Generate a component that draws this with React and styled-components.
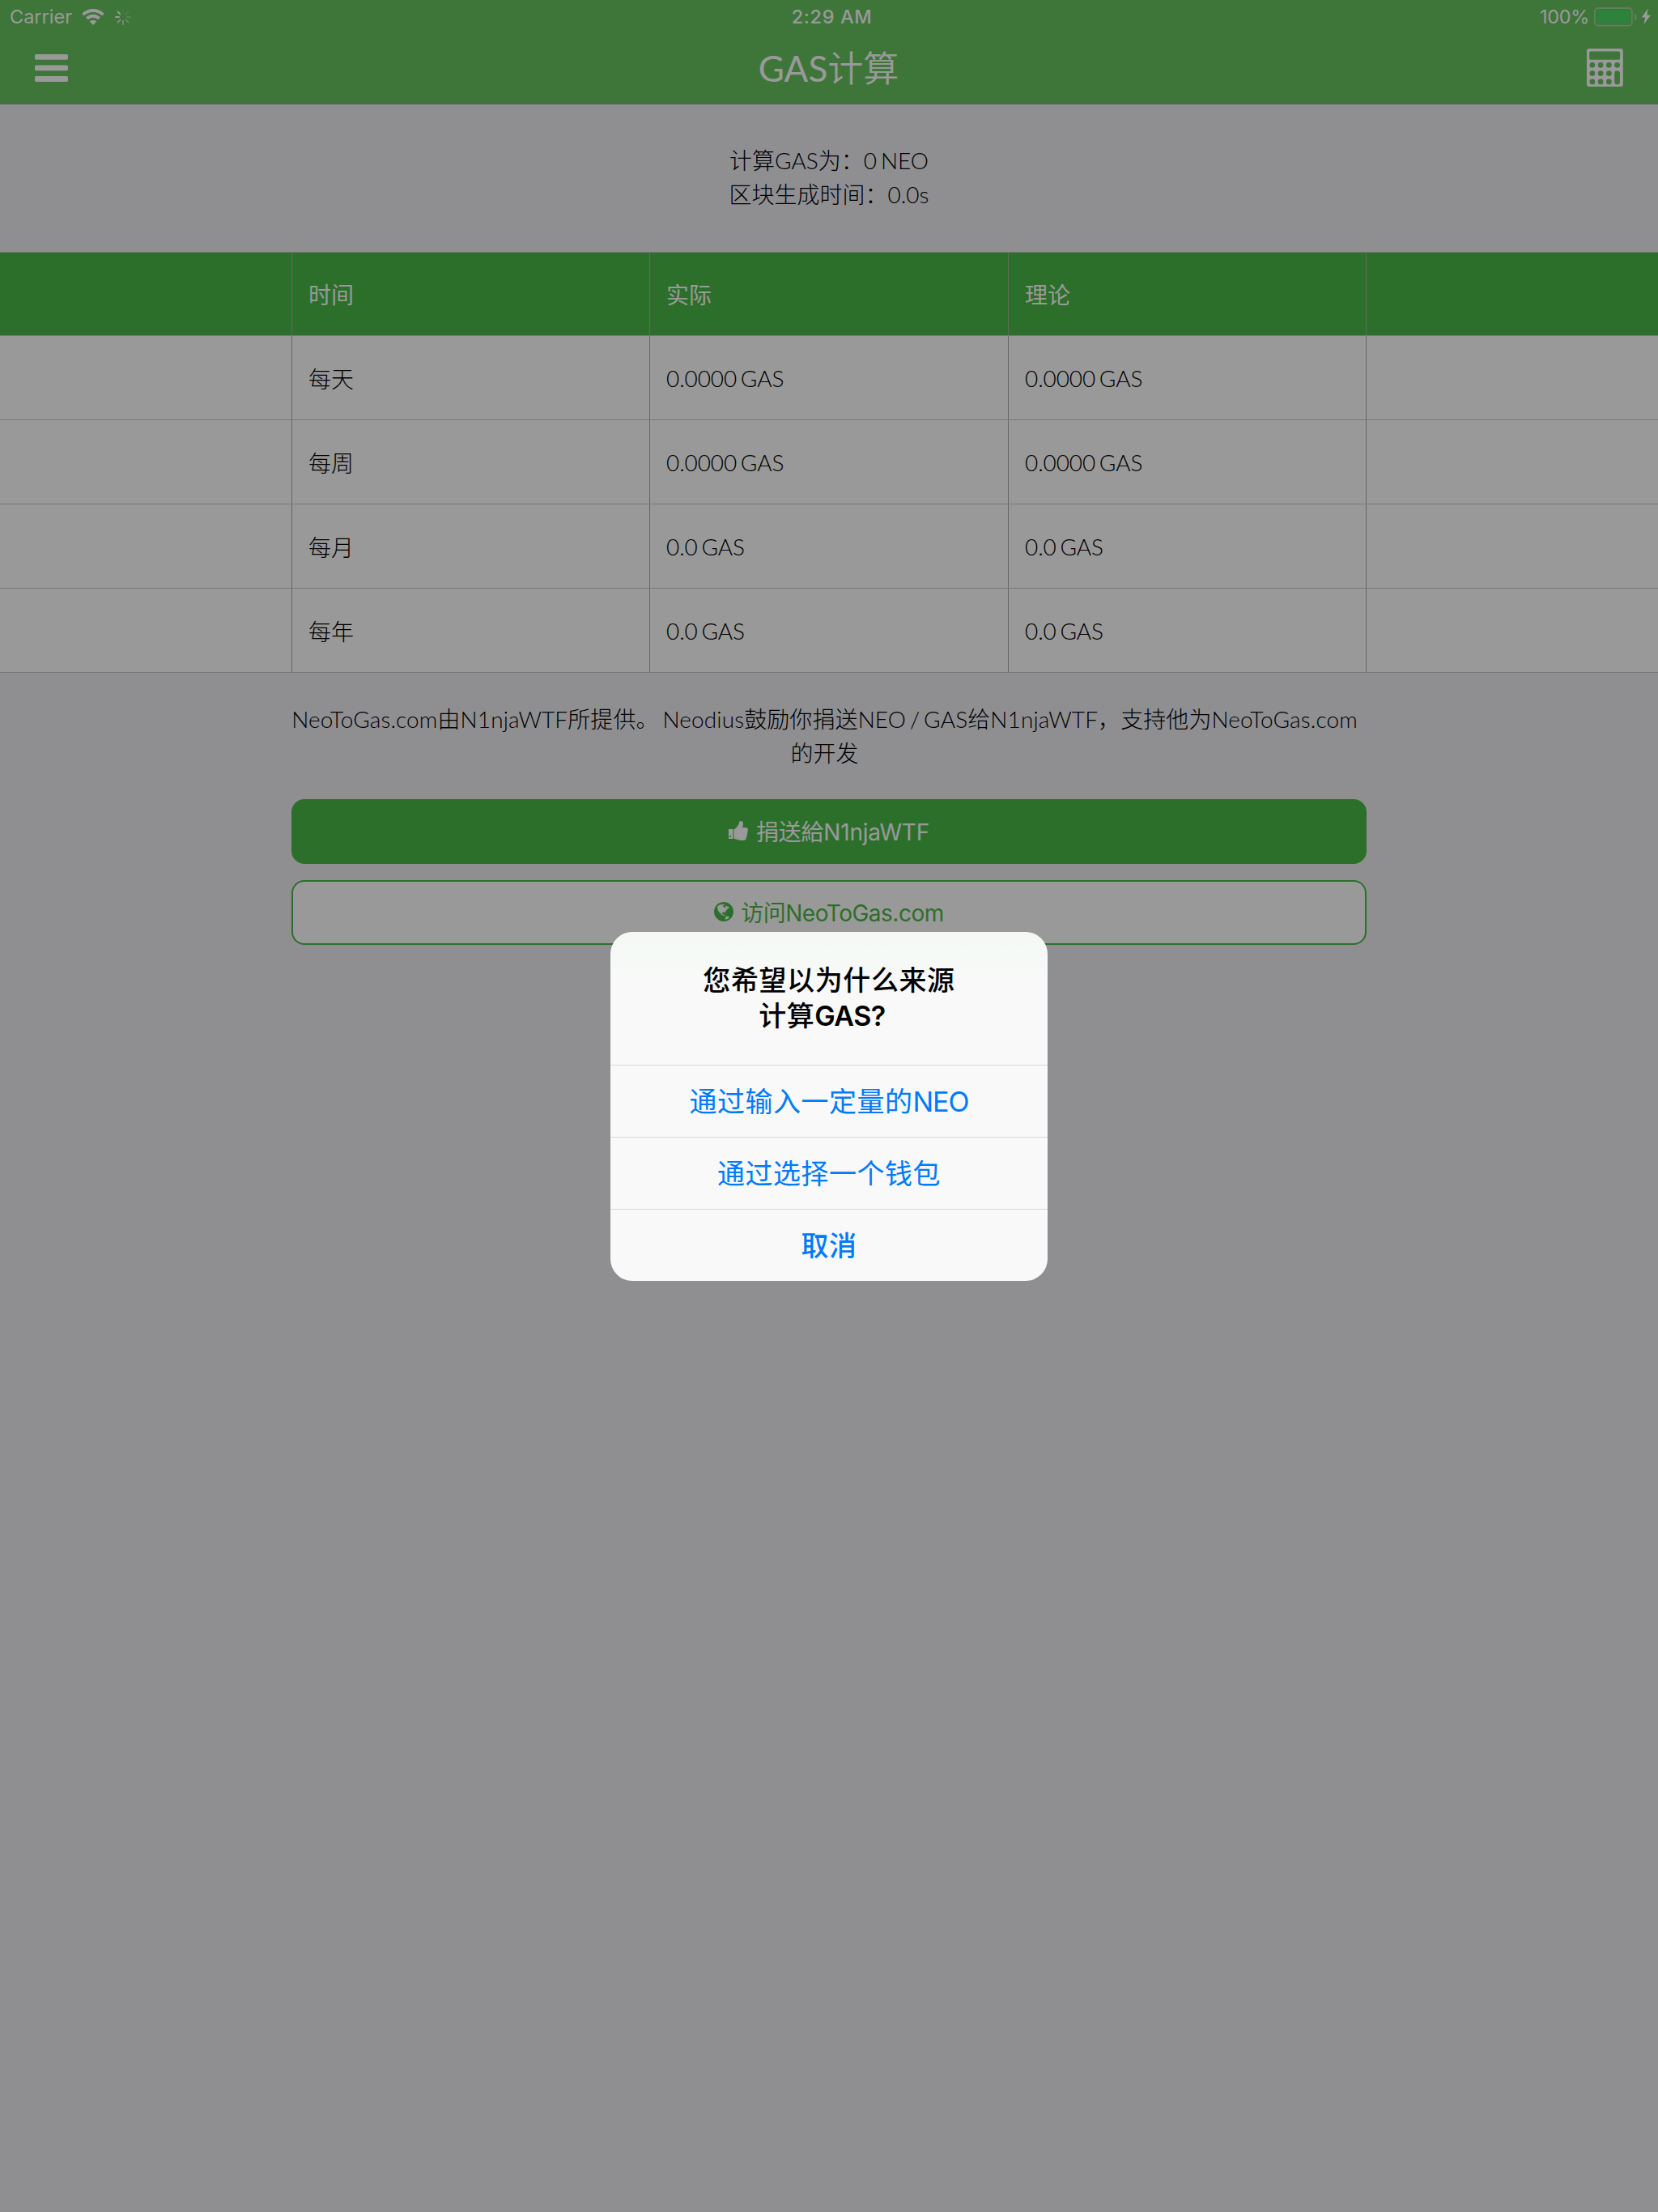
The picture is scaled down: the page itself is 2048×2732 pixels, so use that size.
import React from "react";
import styled, { createGlobalStyle, css } from "styled-components";

const GlobalStyle = createGlobalStyle`
  * { box-sizing: border-box; }
  html, body { margin: 0; padding: 0; background: #efeff4; }
`;

const lato = `Lato, "Noto Sans CJK SC", sans-serif`;
const system = `Inter, "Noto Sans CJK SC", sans-serif`;

const Screen = styled.div`
  position: relative;
  width: 2048px;
  height: 2732px;
  overflow: hidden;
  display: flex;
  flex-direction: column;
  background: #efeff4;
  color: #000;
  font-family: ${lato};
  font-weight: 300;
  font-size: 28px;
  word-spacing: -2.8px;
`;

const Header = styled.header`
  height: 129px;
  background: #68c35f;
  border-bottom: 1px solid #a0a0a5;
  color: #fff;
`;

const StatusBar = styled.div`
  height: 40px;
  padding: 1px 9px 0 12px;
  display: grid;
  grid-template-columns: 1fr auto 1fr;
  align-items: center;
  font-family: ${system};
  font-size: 23.5px;
  font-weight: 400;
  line-height: 40px;
  word-spacing: 0;
`;

const StatusGroup = styled.div`
  display: flex;
  align-items: center;
  justify-content: ${(p) => (p.$end ? "flex-end" : "flex-start")};
`;

const StatusText = styled.span`
  font-weight: ${(p) => p.$weight || 400};
  letter-spacing: ${(p) => p.$spacing || 0}px;
  margin-right: ${(p) => p.$gap || 0}px;
`;

const Clock = styled(StatusText)`
  padding-left: 4px;
`;

const NavBar = styled.nav`
  height: 88px;
  padding: 0 43px;
  display: grid;
  grid-template-columns: 1fr auto 1fr;
  align-items: center;
`;

const NavTitle = styled.h1`
  margin: 0;
  padding-right: 1px;
  font-size: 44px;
  font-weight: 400;
  line-height: 88px;
`;

const TitleHan = styled.span`
  font-weight: 350;
`;

const NavAction = styled.div`
  display: flex;
  justify-content: ${(p) => (p.$end ? "flex-end" : "flex-start")};
  padding-bottom: ${(p) => (p.$end ? 1 : 0)}px;
`;

const Summary = styled.section`
  height: 182px;
  padding-bottom: 3px;
  display: flex;
  flex-direction: column;
  justify-content: center;
  align-items: center;
  line-height: 42px;
`;

const Table = styled.div`
  border-top: 1px solid #c8c7cc;
`;

const Row = styled.div`
  height: ${(p) => (p.$head ? 103 : 104)}px;
  display: grid;
  grid-template-columns: 360px 442px 443px 442px 361px;
  border-bottom: 1px solid #c8c7cc;
  background: ${(p) => (p.$head ? "#4ab948" : "#fff")};
  color: ${(p) => (p.$head ? "#fff" : "#000")};
  font-weight: ${(p) => (p.$head ? 400 : 300)};
`;

const Cell = styled.div`
  display: flex;
  align-items: center;
  padding-left: 20px;
  border-left: 1px solid #aaa;
  letter-spacing: -0.1px;
`;

const Edge = styled.div`
  border-left: ${(p) => (p.$last ? "1px solid #aaa" : "0")};
`;

const Footer = styled.section`
  width: 1328px;
  margin: 36px 0 0 360px;
  display: flex;
  flex-direction: column;
  gap: 20px;
`;

const Credits = styled.p`
  margin: 0 0 16px;
  padding-right: 11px;
  text-align: center;
  line-height: 42px;
`;

const CreditLine = styled.span`
  display: block;
  white-space: nowrap;
  letter-spacing: ${(p) => p.$spacing || 0}px;
`;

const Button = styled.button`
  height: 80px;
  padding: 0 0 3px;
  display: flex;
  align-items: center;
  justify-content: center;
  gap: 9px;
  border: 2px solid #4ab948;
  border-radius: 16px;
  font-family: ${system};
  font-size: 28px;
  font-weight: 400;
  letter-spacing: ${(p) => p.$spacing || 0}px;
  ${(p) =>
    p.$outline
      ? css`
          background: #fff;
          color: #4ab948;
        `
      : css`
          background: #4ab948;
          color: #fff;
        `}
`;

const Backdrop = styled.div`
  position: absolute;
  inset: 0;
  background: rgba(0, 0, 0, 0.4);
  display: flex;
  align-items: center;
  justify-content: center;
`;

const Alert = styled.div`
  width: 540px;
  height: 431px;
  border-radius: 27px;
  overflow: hidden;
  background: linear-gradient(#f4f9f5 0, #f9f9f9 70px);
  font-family: ${system};
  text-align: center;
`;

const AlertTitle = styled.h2`
  margin: 0;
  height: 164px;
  padding-top: 38px;
  font-size: 34px;
  font-weight: 500;
  line-height: 44px;
  letter-spacing: 0.6px;
  color: #000;
`;

const TitleLatin = styled.span`
  margin-right: 17px;
  font-weight: 600;
  letter-spacing: -0.5px;
`;

const AlertAction = styled.div`
  height: 89px;
  border-top: 1px solid #d8d8da;
  color: #007aff;
  font-size: 34px;
  font-weight: ${(p) => (p.$bold ? 500 : 400)};
  line-height: 90px;
  letter-spacing: 0.5px;
`;

const ActionLatin = styled.span`
  letter-spacing: -1px;
`;

const WifiIcon = () => (
  <svg width="28" height="20" viewBox="0 0 28 20" fill="none">
    <path d="M1.6 7.2A17.6 17.6 0 0 1 26.4 7.2" stroke="#fff" strokeWidth="4" />
    <path d="M6.4 11.9A10.8 10.8 0 0 1 21.6 11.9" stroke="#fff" strokeWidth="3.8" />
    <path d="M14 20L9.7 15.6A6.1 6.1 0 0 1 18.3 15.6Z" fill="#fff" />
  </svg>
);

const spokes = [0.12, 0.2, 0.3, 0.5, 0.65, 0.75, 1, 1];

const Spinner = styled.svg`
  margin-left: 13px;
`;

const SpinnerIcon = () => (
  <Spinner width="20" height="20" viewBox="-10 -10 20 20">
    {spokes.map((opacity, i) => (
      <line
        key={i}
        x1="0"
        y1="-5"
        x2="0"
        y2="-9.2"
        stroke="#fff"
        strokeWidth="1.8"
        strokeLinecap="round"
        opacity={opacity}
        transform={`rotate(${i * 45})`}
      />
    ))}
  </Spinner>
);

const BatteryIcon = () => (
  <svg width="70" height="24" viewBox="0 0 70 24">
    <rect x="0.9" y="1" width="46" height="21.6" rx="4.2" fill="none" stroke="#fff" strokeOpacity="0.35" strokeWidth="1.8" />
    <rect x="3.6" y="3.6" width="41" height="16.4" rx="2" fill="#4cd964" />
    <path d="M50 8C53.4 9 53.4 15.5 50 16.5Z" fill="#fff" fillOpacity="0.4" />
    <path d="M66.6 1.6L58.8 12.4h4.4L61.4 21.2l8.6-11.4h-4.5z" fill="#fff" />
  </svg>
);

const MenuIcon = () => (
  <svg width="41" height="34" viewBox="0 0 41 34" fill="#fff">
    <rect y="0" width="41" height="6.8" rx="1.7" />
    <rect y="13.5" width="41" height="6.8" rx="1.7" />
    <rect y="27.1" width="41" height="6.8" rx="1.7" />
  </svg>
);

const CalculatorIcon = () => (
  <svg width="45" height="47" viewBox="0 0 45 47">
    <path
      fill="#fff"
      fillRule="evenodd"
      d="M3 0H42Q44.8 0 44.8 3V44Q44.8 47 42 47H3Q0 47 0 44V3Q0 0 3 0ZM4.7 3.4Q3.2 3.4 3.2 4.9V12.2Q3.2 13.7 4.7 13.7H39.6Q41.1 13.7 41.1 12.2V4.9Q41.1 3.4 39.6 3.4ZM37.6 27.2Q34.2 27.2 34.2 30.6V41Q34.2 44.4 37.6 44.4Q41 44.4 41 41V30.6Q41 27.2 37.6 27.2Z
      M3.5 20.3a3.4 3.4 0 1 0 6.8 0a3.4 3.4 0 1 0 -6.8 0M13.7 20.3a3.4 3.4 0 1 0 6.8 0a3.4 3.4 0 1 0 -6.8 0M24 20.3a3.4 3.4 0 1 0 6.8 0a3.4 3.4 0 1 0 -6.8 0M34.2 20.3a3.4 3.4 0 1 0 6.8 0a3.4 3.4 0 1 0 -6.8 0
      M3.5 30.6a3.4 3.4 0 1 0 6.8 0a3.4 3.4 0 1 0 -6.8 0M13.7 30.6a3.4 3.4 0 1 0 6.8 0a3.4 3.4 0 1 0 -6.8 0M24 30.6a3.4 3.4 0 1 0 6.8 0a3.4 3.4 0 1 0 -6.8 0
      M3.5 40.9a3.4 3.4 0 1 0 6.8 0a3.4 3.4 0 1 0 -6.8 0M13.7 40.9a3.4 3.4 0 1 0 6.8 0a3.4 3.4 0 1 0 -6.8 0M24 40.9a3.4 3.4 0 1 0 6.8 0a3.4 3.4 0 1 0 -6.8 0"
    />
  </svg>
);

const ThumbIcon = () => (
  <svg width="25" height="24" viewBox="128 128 1600 1536" fill="currentColor">
    <path d="M320 1344q0-26-19-45t-45-19q-27 0-45.5 19t-18.5 45q0 27 18.5 45.5t45.5 18.5q26 0 45-18.5t19-45.5zm160-512v640q0 26-19 45t-45 19h-288q-26 0-45-19t-19-45v-640q0-26 19-45t45-19h288q26 0 45 19t19 45zm1184 0q0 86-55 149 15 44 15 76 3 76-43 137 17 56 0 117-15 57-54 94 9 112-49 181-64 76-197 78h-129q-66 0-144-15.5t-121.5-29-120.5-39.5q-123-43-158-44-26-1-45-19.5t-19-44.5v-641q0-25 18-43.5t43-20.5q24-2 76-59t101-121q68-87 101-120 18-18 31-48t17.5-48.5 13.5-60.5q7-39 12.5-61t19.5-52 34-50q19-19 45-19 46 0 82.5 10.5t60 26 40 40.5 24 45 12 50 5 45 .5 39q0 38-9.5 76t-19 60-27.5 56q-3 6-10 18t-11 22-8 24h277q78 0 135 57t57 135z" />
  </svg>
);

const GlobeIcon = () => (
  <svg width="24" height="24" viewBox="128 128 1536 1536" fill="currentColor">
    <path d="M896 128q209 0 385.5 103t279.5 279.5 103 385.5-103 385.5-279.5 279.5-385.5 103-385.5-103-279.5-279.5-103-385.5 103-385.5 279.5-279.5 385.5-103zm274 521q-2 1-9.5 9.5t-13.5 9.5q2 0 4.5-5t5-11 3.5-7q6-7 22-15 14-6 52-12 34-8 51 11-2-2 9.5-13t14.5-12q3-2 15-4.5t15-7.5l2-22q-12 1-17.5-7t-6.5-21q0 2-6 8 0-7-4.5-8t-11.5 1-9 1q-10-3-15-7.5t-8-16.5-4-15q-2-5-9.5-11t-9.5-10q-1-2-2.5-5.5t-3-6.5-4-5.5-5.5-2.5-7 5-7.5 10-4.5 5q-3-2-6-1.5t-4.5 1-4.5 3-5 3.5q-3 2-8.5 3t-8.5 2q15-5-1-11-10-4-16-3 9-4 7.5-12t-8.5-14h5q-1-4-8.5-8.5t-17.5-8.5-13-6q-8-5-34-9.5t-33-.5q-5 6-4.5 10.5t4 14 3.5 12.5q1 6-5.5 13t-6.5 12q0 7 14 15.5t10 21.5q-3 8-16 16t-16 12q-5 8-1.5 18.5t10.5 16.5q2 2 1.5 4t-3.5 4.5-5.5 4-6.5 3.5l-3 2q-11 5-20.5-6t-13.5-26q-7-25-16-30-23-8-29 1-5-13-41-26-25-9-58-4 6-1 0-15-7-15-19-12 3-6 4-17.5t1-13.5q3-13 12-23 1-1 7-8.5t9.5-13.5.5-6q35 4 50-11 5-5 11.5-17t10.5-17q9-6 14-5.5t14.5 5.5 14.5 5q14 1 15.5-11t-7.5-20q12 1 3-17-4-7-8-9-12-4-27 5-8 4 2 8-1-1-9.5 10.5t-16.5 17.5-16-5q-1-1-5.5-13.5t-9.5-13.5q-8 0-16 15 3-8-11-15t-24-8q19-12-8-27-7-4-20.5-5t-19.5 4q-5 7-5.5 11.5t5 8 10.5 5.5 11.5 4 8.5 3q14 10 8 14-2 1-8.5 3.5t-11.5 4.5-6 4q-3 4 0 14t-2 14q-5-5-9-17.5t-7-16.5q7 9-25 6l-10-1q-4 0-16 2t-20.5 1-13.5-8q-4-8 0-20 1-4 4-2-4-3-11-9.5t-10-8.5q-46 15-94 41 6 1 12-1 5-2 13-6.5t10-5.5q34-14 42-7l5-5q14 16 20 25-7-4-30-1-20 6-22 12 7 12 5 18-4-3-11.5-10t-14.5-11-15-5q-16 0-22 1-146 80-235 222 7 7 12 8 4 1 5 9t2.5 11 11.5-3q9 8 3 19 1-1 44 27 19 17 21 21 3 11-10 18-1-2-9-9t-9-4q-3 5 .5 18.5t10.5 12.5q-7 0-9.5 16t-2.5 35.5-1 23.5l2 1q-3 12 5.5 34.5t21.5 19.5q-13 3 20 43 6 8 8 9 3 2 12 7.5t15 10 10 10.5q4 5 10 22.5t14 23.5q-2 6 9.5 20t10.5 23q-1 0-2.5 1t-2.5 1q3 7 15.5 14t15.5 13q1 3 2 10t3 11 8 2q2-20-24-62-15-25-17-29-3-5-5.5-15.5t-4.5-14.5q2 0 6 1.5t8.5 3.5 7.5 4 2 3q-3 7 2 17.5t12 18.5 17 19 12 13q6 6 14 19.5t0 13.5q9 0 20 10.5t17 19.5q5 8 8 26t5 24q2 7 8.5 13.5t12.5 9.5l16 8 13 7q5 2 18.5 10.5t21.5 11.5q10 4 16 4t14.5-2.5 13.5-3.5q15-2 29 15t21 21q36 19 55 11-2 1 .5 7.5t8 15.5 9 14.5 5.5 8.5q5 6 18 15t18 15q6-4 7-9-3 8 7 20t18 10q14-3 14-32-31 15-49-18 0-1-2.5-5.5t-4-8.5-2.5-8.5 0-7.5 5-3q9 0 10-3.5t-2-12.5-4-13q-1-8-11-20t-12-15q-5 9-16 8t-16-9q0 1-1.5 5.5t-1.5 6.5q-13 0-15-1 1-3 2.5-17.5t3.5-22.5q1-4 5.5-12t7.5-14.5 4-12.5-4.5-9.5-17.5-2.5q-19 1-26 20-1 3-3 10.5t-5 11.5-9 7q-7 3-24 2t-24-5q-13-8-22.5-29t-9.5-37q0-10 2.5-26.5t3-25-5.5-24.5q3-2 9-9.5t10-10.5q2-1 4.5-1.5t4.5 0 4-1.5 3-6q-1-1-4-3-3-3-4-3 7 3 28.5-1.5t27.5 1.5q15 11 22-2 0-1-2.5-9.5t-.5-13.5q5 27 29 9 3 3 15.5 5t17.5 5q3 2 7 5.5t5.5 4.5 5-.5 8.5-6.5q10 14 12 24 11 40 19 44 7 3 11 2t4.5-9.5 0-14-1.5-12.5l-1-8v-18l-1-8q-15-3-18.5-12t1.5-18.5 15-18.5q1-1 8-3.5t15.5-6.5 12.5-8q21-19 15-35 7 0 11-9-1 0-5-3t-7.5-5-4.5-2q9-5 2-16 5-3 7.5-11t7.5-10q9 12 21 2 7-8 1-16 5-7 20.5-10.5t18.5-9.5q7 2 8-2t1-12 3-12q4-5 15-9t13-5l17-11q3-4 0-4 18 2 31-11 10-11-6-20 3-6-3-9.5t-15-5.5q3-1 11.5-.5t10.5-1.5q15-10-7-16-17-5-43 12zm-163 877q206-36 351-189-3-3-12.5-4.5t-12.5-3.5q-18-7-24-8 1-7-2.5-13t-8-9-12.5-8-11-7q-2-2-7-6t-7-5.5-7.5-4.5-8.5-2-10 1l-3 1q-3 1-5.5 2.5t-5.5 3-4 3 0 2.5q-21-17-36-22-5-1-11-5.5t-10.5-7-10-1.5-11.5 7q-5 5-6 15t-2 13q-7-5 0-17.5t2-18.5q-3-6-10.5-4.5t-12 4.5-11.5 8.5-9 6.5-8.5 5.5-8.5 7.5q-3 4-6 12t-5 11q-2-4-11.5-6.5t-9.5-5.5q2 10 4 35t5 38q7 31-12 48-27 25-29 40-4 22 12 26 0 7-8 20.5t-7 21.5q0 6 2 16z" />
  </svg>
);

const rows = [
  ["每天", "0.0000 GAS", "0.0000 GAS"],
  ["每周", "0.0000 GAS", "0.0000 GAS"],
  ["每月", "0.0 GAS", "0.0 GAS"],
  ["每年", "0.0 GAS", "0.0 GAS"],
];

export default function App() {
  return (
    <Screen lang="zh-Hans">
      <GlobalStyle />
      <Header>
        <StatusBar>
          <StatusGroup>
            <StatusText $gap={12}>Carrier</StatusText>
            <WifiIcon />
            <SpinnerIcon />
          </StatusGroup>
          <Clock $weight={500} $spacing={0.6}>2:29 AM</Clock>
          <StatusGroup $end>
            <StatusText $gap={6} $spacing={-0.3}>100%</StatusText>
            <BatteryIcon />
          </StatusGroup>
        </StatusBar>
        <NavBar>
          <NavAction><MenuIcon /></NavAction>
          <NavTitle>GAS<TitleHan>计算</TitleHan></NavTitle>
          <NavAction $end><CalculatorIcon /></NavAction>
        </NavBar>
      </Header>
      <Summary>
        <span>计算GAS为：0 NEO</span>
        <span>区块生成时间：0.0s</span>
      </Summary>
      <Table>
        <Row $head>
          <Edge />
          <Cell>时间</Cell>
          <Cell>实际</Cell>
          <Cell>理论</Cell>
          <Edge $last />
        </Row>
        {rows.map(([period, actual, theory]) => (
          <Row key={period}>
            <Edge />
            <Cell>{period}</Cell>
            <Cell>{actual}</Cell>
            <Cell>{theory}</Cell>
            <Edge $last />
          </Row>
        ))}
      </Table>
      <Footer>
        <Credits>
          <CreditLine $spacing={0.1}>NeoToGas.com由N1njaWTF所提供。 Neodius鼓励你捐送NEO / GAS给N1njaWTF，支持他为NeoToGas.com</CreditLine>
          <CreditLine>的开发</CreditLine>
        </Credits>
        <Button $spacing={-0.2}>
          <ThumbIcon />
          捐送給N1njaWTF
        </Button>
        <Button $outline $spacing={-0.5}>
          <GlobeIcon />
          访问NeoToGas.com
        </Button>
      </Footer>
      <Backdrop>
        <Alert>
          <AlertTitle>
            您希望以为什么来源
            <br />
            计算<TitleLatin>GAS?</TitleLatin>
          </AlertTitle>
          <AlertAction>
            通过输入一定量的<ActionLatin>NEO</ActionLatin>
          </AlertAction>
          <AlertAction>通过选择一个钱包</AlertAction>
          <AlertAction $bold>取消</AlertAction>
        </Alert>
      </Backdrop>
    </Screen>
  );
}
